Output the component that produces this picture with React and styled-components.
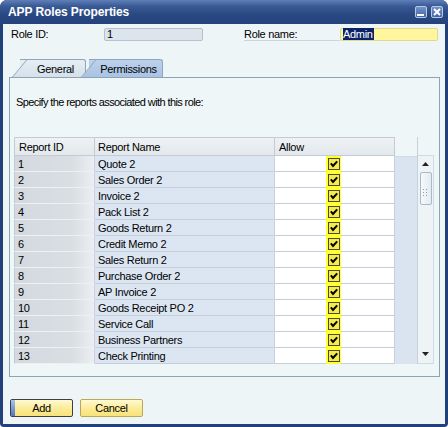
import React from "react";
import styled, { createGlobalStyle } from "styled-components";

const reports = [
  "Quote 2",
  "Sales Order 2",
  "Invoice 2",
  "Pack List 2",
  "Goods Return 2",
  "Credit Memo 2",
  "Sales Return 2",
  "Purchase Order 2",
  "AP Invoice 2",
  "Goods Receipt PO 2",
  "Service Call",
  "Business Partners",
  "Check Printing",
];

const GlobalStyle = createGlobalStyle`
  body {
    margin: 0;
    background: #ffffff;
    font-family: "Liberation Sans", Arial, sans-serif;
    font-size: 11px;
    letter-spacing: -0.3px;
    color: #000;
  }
`;

const CheckIcon = () => (
  <svg width="12" height="12" viewBox="0 0 12 12">
    <rect x="0.5" y="0.5" width="11" height="11" fill="#f3ec4a" stroke="#4e4d26" />
    <path d="M2.8 5.3 L5 8 L9.2 3.3" fill="none" stroke="#000" strokeWidth="2" />
  </svg>
);

const App = () => (
  <>
    <GlobalStyle />
    <Window>
      <TitleBar>
        <Title>APP Roles Properties</Title>
        <Controls>
          <CtrlButton>
            <svg width="10" height="10" viewBox="0 0 10 10">
              <rect x="1" y="7" width="7" height="2" fill="#fff" />
            </svg>
          </CtrlButton>
          <CtrlButton>
            <svg width="10" height="10" viewBox="0 0 10 10">
              <path d="M2 2 L8 8 M8 2 L2 8" stroke="#fff" strokeWidth="2" />
            </svg>
          </CtrlButton>
        </Controls>
      </TitleBar>
      <Body>
        <FieldRow>
          <Label width={93}>Role ID:</Label>
          <Input width={99}>1</Input>
          <Label width={96} underline gap={41}>
            Role name:
          </Label>
          <Input width={98} edit>
            <Selected>Admin</Selected>
          </Input>
        </FieldRow>
        <Tabs>
          <Tab offset={17}>
            <span>General</span>
          </Tab>
          <Tab offset={3} active>
            <span>Permissions</span>
          </Tab>
        </Tabs>
        <Panel>
          <Hint>Specify the reports associated with this role:</Hint>
          <GridArea>
            <Grid>
              <Row header>
                <IdCell header>Report ID</IdCell>
                <NameCell header>Report Name</NameCell>
                <AllowCell header>Allow</AllowCell>
              </Row>
              {reports.map((name, i) => (
                <Row key={name}>
                  <IdCell>{i + 1}</IdCell>
                  <NameCell>{name}</NameCell>
                  <AllowCell>
                    <Stripe>
                      <CheckIcon />
                    </Stripe>
                  </AllowCell>
                </Row>
              ))}
            </Grid>
            <Filler>
              <FillerHead />
              <FillerBody />
            </Filler>
            <ScrollColumn>
              <ScrollHead />
              <Track>
                <Arrow>
                  <svg width="7" height="4" viewBox="0 0 7 4">
                    <path d="M0 4 L3.5 0 L7 4 Z" fill="#222" />
                  </svg>
                </Arrow>
                <Thumb>
                  <svg width="5" height="7" viewBox="0 0 5 7">
                    <rect x="0" y="0" width="1" height="1" fill="#8a9aae" />
                    <rect x="3" y="0" width="1" height="1" fill="#8a9aae" />
                    <rect x="0" y="3" width="1" height="1" fill="#8a9aae" />
                    <rect x="3" y="3" width="1" height="1" fill="#8a9aae" />
                    <rect x="0" y="6" width="1" height="1" fill="#8a9aae" />
                    <rect x="3" y="6" width="1" height="1" fill="#8a9aae" />
                  </svg>
                </Thumb>
                <TrackSpace />
                <Arrow>
                  <svg width="7" height="4" viewBox="0 0 7 4">
                    <path d="M0 0 L7 0 L3.5 4 Z" fill="#222" />
                  </svg>
                </Arrow>
              </Track>
            </ScrollColumn>
          </GridArea>
        </Panel>
        <Footer>
          <Button focused>Add</Button>
          <Button>Cancel</Button>
        </Footer>
      </Body>
    </Window>
  </>
);

const Window = styled.div`
  width: 448px;
  height: 427px;
  box-sizing: border-box;
  background: #22407a;
  border-radius: 7px 7px 4px 4px;
  display: flex;
  flex-direction: column;
  overflow: hidden;
`;

const TitleBar = styled.div`
  height: 24px;
  flex: none;
  display: flex;
  align-items: center;
  justify-content: space-between;
  padding: 0 5px 0 8px;
  background: linear-gradient(#5f7fb8 0%, #3a5b96 25%, #2a4983 60%, #24427c 100%);
`;

const Title = styled.div`
  color: #fff;
  font-weight: bold;
  font-size: 12px;
  letter-spacing: -0.1px;
`;

const Controls = styled.div`
  display: flex;
  gap: 4px;
  margin-top: -1px;
`;

const CtrlButton = styled.div`
  width: 12px;
  height: 12px;
  box-sizing: border-box;
  border: 1px solid #b8c9e6;
  border-radius: 2px;
  background: linear-gradient(#7393cc, #4465a5);
  display: flex;
  align-items: center;
  justify-content: center;
`;

const Body = styled.div`
  flex: 1;
  margin: 0 3px 3px;
  background: #eef5f7;
  display: flex;
  flex-direction: column;
`;

const FieldRow = styled.div`
  display: flex;
  align-items: stretch;
  height: 13px;
  margin-top: 4px;
  padding-left: 8px;
`;

const Label = styled.div`
  width: ${(p) => p.width}px;
  margin-left: ${(p) => p.gap || 0}px;
  line-height: 13px;
  border-bottom: ${(p) => (p.underline ? "1px solid #c9d5de" : "none")};
`;

const Input = styled.div`
  width: ${(p) => p.width}px;
  box-sizing: border-box;
  line-height: 11px;
  padding-left: 2px;
  border: 1px solid ${(p) => (p.edit ? "#e0d890" : "#b4c2cf")};
  border-radius: 2px;
  background: ${(p) => (p.edit ? "#fff69e" : "#dce4ec")};
`;

const Selected = styled.span`
  background: #0b2468;
  color: #fff;
  padding-right: 1px;
`;

const Tabs = styled.div`
  display: flex;
  height: 18px;
  margin-top: 18px;
`;

const Tab = styled.div`
  position: relative;
  z-index: ${(p) => (p.active ? 2 : 1)};
  margin-left: ${(p) => p.offset}px;
  width: ${(p) => (p.active ? 74 : 66)}px;
  box-sizing: border-box;
  border-top: 1px solid #8fa5bd;
  border-right: 1px solid #8fa5bd;
  border-radius: 0 3px 0 0;
  background: ${(p) =>
    p.active
      ? "linear-gradient(#bcd2ec, #a9c3e3)"
      : "linear-gradient(#e6eef3, #d4e0ea)"};
  display: flex;
  align-items: center;
  justify-content: center;
  &::before {
    content: "";
    position: absolute;
    left: -8px;
    top: -1px;
    bottom: 0;
    width: 20px;
    border-left: 1px solid #8fa5bd;
    border-top: 1px solid #8fa5bd;
    background: ${(p) =>
      p.active
        ? "linear-gradient(#bcd2ec, #a9c3e3)"
        : "linear-gradient(#e6eef3, #d4e0ea)"};
    transform-origin: bottom left;
    transform: skewX(-40deg);
  }
  span {
    position: relative;
    margin-left: 6px;
  }
`;

const Panel = styled.div`
  height: 300px;
  box-sizing: border-box;
  margin: 0 5px 0 6px;
  border: 1px solid #8ea3b8;
  background: #eff6f8;
  padding: 18px 0 12px 4px;
  position: relative;
  z-index: 3;
`;

const Hint = styled.div`
  line-height: 13px;
  margin: 0 0 28px 2px;
  letter-spacing: -0.6px;
`;

const GridArea = styled.div`
  display: flex;
`;

const Grid = styled.div`
  display: flex;
  flex-direction: column;
  width: 381px;
`;

const Row = styled.div`
  display: flex;
  height: ${(p) => (p.header ? 19 : 16)}px;
  box-sizing: border-box;
`;

const Cell = styled.div`
  box-sizing: border-box;
  display: flex;
  align-items: center;
  white-space: nowrap;
  border-bottom: 1px solid ${(p) => (p.header ? "#c3ccd5" : "#c4ced9")};
  border-top: ${(p) => (p.header ? "1px solid #c3ccd5" : "none")};
  border-right: 1px solid ${(p) => (p.header ? "#c3ccd5" : "#c9d2dc")};
  ${(p) => p.header && "background: linear-gradient(#eef2f4, #e3e8ec);"}
`;

const IdCell = styled(Cell)`
  width: 81px;
  padding-left: ${(p) => (p.header ? 4 : 3)}px;
  border-left: 1px solid #c3ccd5;
  ${(p) =>
    !p.header &&
    `background: linear-gradient(to right, #d3d9df 0%, #d9dee3 72%, #eceef1 100%);
     border-bottom-color: #eef0f2;`}
`;

const NameCell = styled(Cell)`
  width: 180px;
  padding-left: 3px;
  ${(p) => !p.header && "background: #dce6f3;"}
`;

const AllowCell = styled(Cell)`
  width: 120px;
  padding-left: 4px;
  position: relative;
  ${(p) => !p.header && "background: #ffffff; padding-left: 0;"}
`;

const Stripe = styled.div`
  position: absolute;
  left: 51px;
  top: 0;
  bottom: -1px;
  width: 15px;
  background: #ffff3a;
  display: flex;
  align-items: center;
  justify-content: center;
`;

const Filler = styled.div`
  width: 22px;
  display: flex;
  flex-direction: column;
`;

const FillerHead = styled.div`
  height: 19px;
`;

const FillerBody = styled.div`
  flex: 1;
  background: #dae4f1;
  border-top: 1px solid #d0dae4;
`;

const ScrollColumn = styled.div`
  width: 16px;
  display: flex;
  flex-direction: column;
  border-left: 1px solid #c6d1db;
`;

const ScrollHead = styled.div`
  height: 18px;
`;

const Track = styled.div`
  flex: 1;
  display: flex;
  flex-direction: column;
  align-items: center;
  border-top: 1px solid #d0dae4;
  border-right: 1px solid #d0dae4;
  border-bottom: 1px solid #d0dae4;
  background: #eef3f6;
  padding: 5px 0 6px;
`;

const Arrow = styled.div`
  height: 6px;
  display: flex;
  align-items: center;
`;

const Thumb = styled.div`
  width: 12px;
  height: 33px;
  box-sizing: border-box;
  margin-top: 5px;
  border: 1px solid #aab8c7;
  border-radius: 2px;
  background: linear-gradient(to right, #f6f9fb, #e4ebf1);
  display: flex;
  align-items: flex-end;
  justify-content: center;
  padding-bottom: 8px;
`;

const TrackSpace = styled.div`
  flex: 1;
`;

const Footer = styled.div`
  display: flex;
  gap: 7px;
  margin: 22px 0 0 7px;
`;

const Button = styled.div`
  width: 63px;
  height: 18px;
  box-sizing: border-box;
  border: 1px solid ${(p) => (p.focused ? "#3f3f3f" : "#b9a75a")};
  border-radius: 2px;
  background: linear-gradient(#fffad2, #fbeb96 55%, #f8e27a);
  display: flex;
  align-items: center;
  justify-content: center;
  position: relative;
  ${(p) =>
    p.focused &&
    `&::before {
      content: "";
      position: absolute;
      left: 0;
      top: 0;
      bottom: 0;
      width: 4px;
      background: linear-gradient(#a9c4ea, #4f77c0);
    }`}
`;

export default App;
